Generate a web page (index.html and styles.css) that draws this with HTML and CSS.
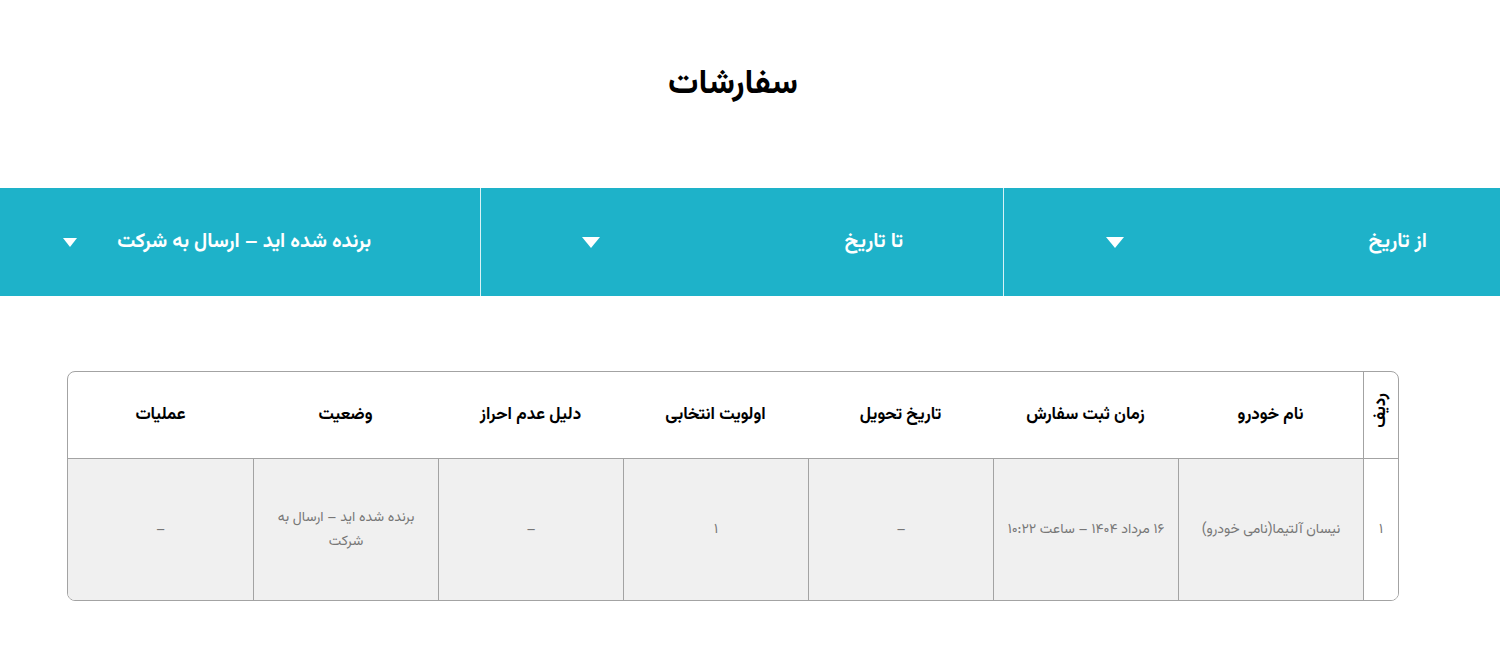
FILE: index.html
```html
<!DOCTYPE html>
<html lang="fa" dir="rtl">
<head>
    <meta charset="UTF-8">
    <meta name="viewport" content="width=device-width, initial-scale=1.0">
    <title>سفارشات</title>
    <link rel="stylesheet" href="styles.css">
</head>
<body>
    <h1 class="page-title">سفارشات</h1>

    <div class="filters">
        <div class="filter filter-from">
            <span class="filter-label">از تاریخ</span>
            <span class="caret"></span>
        </div>
        <div class="filter filter-to">
            <span class="filter-label">تا تاریخ</span>
            <span class="caret"></span>
        </div>
        <div class="filter filter-status">
            <span class="filter-label">برنده شده اید – ارسال به شرکت</span>
            <span class="caret caret-small"></span>
        </div>
    </div>

    <div class="container">
        <table class="orders">
            <colgroup>
                <col class="col-num">
                <col><col><col><col><col><col><col>
            </colgroup>
            <thead>
                <tr>
                    <th class="num"><span class="vertical">ردیف</span></th>
                    <th>نام خودرو</th>
                    <th>زمان ثبت سفارش</th>
                    <th>تاریخ تحویل</th>
                    <th>اولویت انتخابی</th>
                    <th>دلیل عدم احراز</th>
                    <th>وضعیت</th>
                    <th>عملیات</th>
                </tr>
            </thead>
            <tbody>
                <tr>
                    <td class="num">۱</td>
                    <td>نیسان آلتیما(نامی خودرو)</td>
                    <td>۱۶ مرداد ۱۴۰۴ – ساعت ۱۰:۲۲</td>
                    <td>–</td>
                    <td>۱</td>
                    <td>–</td>
                    <td>برنده شده اید – ارسال به شرکت</td>
                    <td>–</td>
                </tr>
            </tbody>
        </table>
    </div>
</body>
</html>
```

FILE: styles.css
```css
body {
    font-family: "Vazirmatn", "Noto Sans Arabic", "DejaVu Sans", sans-serif;
    margin: 0;
    padding: 0;
    background-color: #fff;
    color: #000;
}
.page-title {
    margin: 0;
    padding: 63px 34px 0 0;
    height: 188px;
    box-sizing: border-box;
    text-align: center;
    font-size: 34px;
    font-weight: bold;
    line-height: 44px;
}
.filters {
    display: grid;
    grid-template-columns: 497px 523px 480px;
    height: 108px;
    background: #1eb2c9;
    color: #fff;
}
.filter {
    display: flex;
    align-items: center;
    justify-content: space-between;
    border-left: 1px solid #d8f2f6;
    font-weight: bold;
    font-size: 20px;
}
.filter:last-child {
    border-left: none;
}
.filter-from {
    padding: 0 73px 0 102px;
}
.filter-to {
    padding: 0 100px 0 101px;
}
.filter-status {
    padding: 0 109px 0 63px;
}
.caret {
    width: 0;
    height: 0;
    border-left: 9px solid transparent;
    border-right: 9px solid transparent;
    border-top: 11px solid #fff;
}
.caret-small {
    border-left-width: 7px;
    border-right-width: 7px;
    border-top-width: 9px;
}
.container {
    padding: 75px 101px 0 67px;
}
.orders {
    table-layout: fixed;
    border-collapse: separate;
    border-spacing: 0;
    border: 1px solid #a3a3a3;
    border-radius: 8px;
    overflow: hidden;
}
.orders col {
    width: 185px;
}
.orders col.col-num {
    width: 35px;
}
.orders th {
    height: 86px;
    padding: 0 8px;
    font-size: 17px;
    font-weight: bold;
    border-bottom: 1px solid #a3a3a3;
}
.orders th.num {
    padding: 0;
    border-left: 1px solid #a3a3a3;
}
.vertical {
    display: inline-block;
    writing-mode: vertical-rl;
    transform: rotate(180deg);
}
.orders td {
    height: 141px;
    padding: 0 10px;
    text-align: center;
    font-size: 14px;
    line-height: 24px;
    color: #777;
    background: #f0f0f0;
    border-left: 1px solid #a3a3a3;
}
.orders td:last-child {
    border-left: none;
}
.orders td.num {
    background: #fff;
    padding: 0;
}
```
